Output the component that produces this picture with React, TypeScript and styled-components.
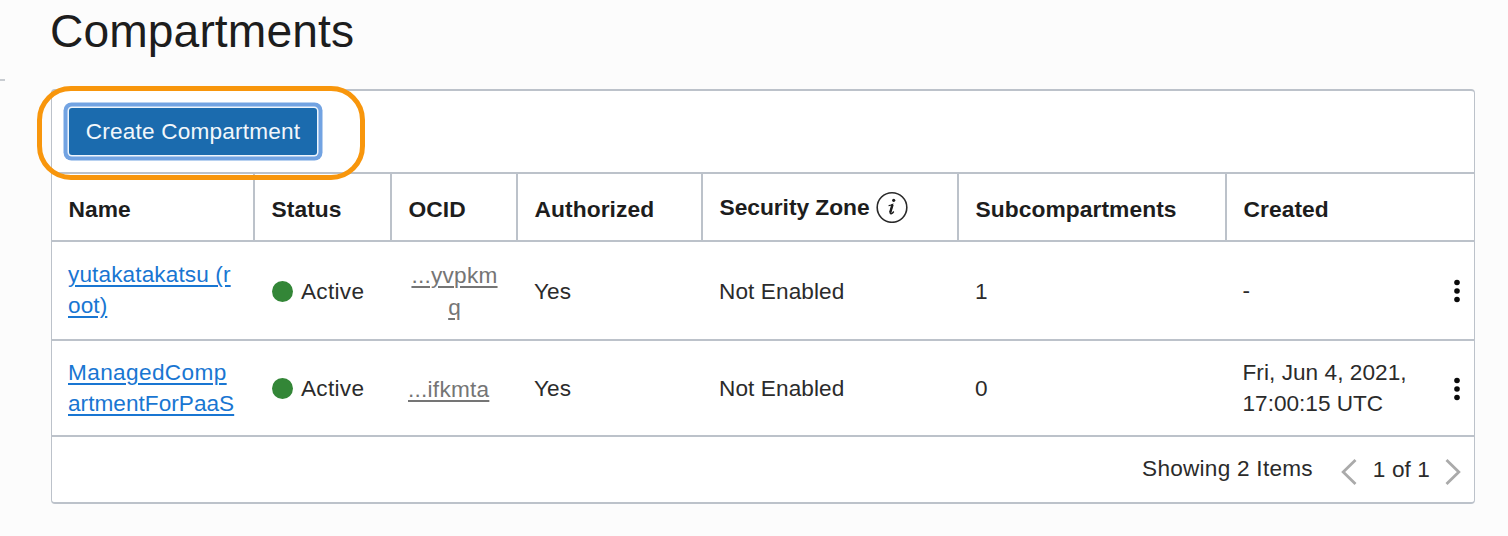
import React from "react";
import styled, { createGlobalStyle } from "styled-components";

const line = "#bcc2ca";

const GlobalStyle = createGlobalStyle`
  * { box-sizing: border-box; }
  body {
    margin: 0;
    background: #fcfcfc;
    color: #2b2b2b;
    font-family: "Liberation Sans", Arial, sans-serif;
    font-size: 22.6px;
    line-height: 31px;
    letter-spacing: 0.1px;
    overflow: hidden;
  }
`;

const Page = styled.main`
  width: 1508px;
  height: 536px;
  display: flex;
  align-items: flex-start;
`;

const SideEdge = styled.div`
  width: 5px;
  height: 2px;
  margin: 79px 46px 0 0;
  background: #c8ccd1;
`;

const Content = styled.section`
  width: 1424px;
`;

const Title = styled.h1`
  margin: 0 0 0 -1px;
  height: 89px;
  padding-top: 5px;
  font-size: 46.2px;
  font-weight: 400;
  line-height: 52px;
  color: #1d1d1d;
`;

const Panel = styled.div`
  background: #fff;
  border: 1px solid ${line};
  border-width: 2px 1px 2px 1px;
  border-radius: 4px;
`;

const Toolbar = styled.div`
  position: relative;
  height: 81px;
  padding: 17px 0 0 17px;
`;

const CreateButton = styled.button`
  display: block;
  width: 248px;
  height: 47px;
  padding: 0 0 1px;
  border: 0;
  border-radius: 3px;
  background: #1b6bae;
  box-shadow: 0 0 0 1.5px #eef5fc, 0 0 0 5.5px #72a3e2;
  color: #f2f7fb;
  font: inherit;
  letter-spacing: 0.2px;
  white-space: nowrap;
`;

const Highlight = styled.div`
  position: absolute;
  left: -15px;
  top: -5px;
  width: 328px;
  height: 94px;
  border: 5px solid #f8960c;
  border-radius: 34px;
  pointer-events: none;
`;

const Table = styled.div`
  display: grid;
  grid-template-columns: 203px 137px 126px 185px 256px 268px 1fr;
`;

const HeadCell = styled.div<{ $last?: boolean; $raise?: boolean }>`
  height: 68px;
  display: flex;
  align-items: center;
  gap: ${(p) => (p.$raise ? "6px" : "0")};
  padding: ${(p) => (p.$raise ? "0 0 0 16.5px" : "4px 0 0 16.5px")};
  border-top: 2px solid ${line};
  border-right: ${(p) => (p.$last ? "0" : `2px solid ${line}`)};
  font-size: 22.8px;
  font-weight: 700;
  letter-spacing: ${(p) => (p.$raise ? "-0.05px" : "0.06px")};
  color: #1d1d1d;
  white-space: nowrap;
`;

const Cell = styled.div<{ $height: number }>`
  height: ${(p) => p.$height}px;
  display: flex;
  align-items: center;
  padding: 1px 0 0 16px;
  border-top: 2px solid ${line};
  white-space: nowrap;
`;

const TextLine = styled.span<{ $tracking: number }>`
  display: block;
  letter-spacing: ${(p) => p.$tracking}px;
`;

const NameLink = styled.a`
  margin-top: -2px;
  color: #1976d2;
  text-decoration: underline;
  text-decoration-thickness: 1.5px;
  text-underline-offset: 3px;
`;

const Ocid = styled.a<{ $width: number }>`
  width: ${(p) => p.$width}px;
  margin-top: 2px;
  text-align: center;
  color: #757575;
  line-height: 32px;
  text-decoration: underline;
  text-decoration-thickness: 1.5px;
  text-underline-offset: 3px;
`;

const StatusDot = styled.span`
  width: 21px;
  height: 21px;
  margin: 0 8px 0 1px;
  border-radius: 50%;
  background: #338637;
`;

const StatusText = styled.span`
  letter-spacing: 0.3px;
`;

const Created = styled.div`
  flex: 1;
  margin: -2px 0 0 -0.5px;
`;

const MenuIcon = styled.svg`
  width: 8px;
  height: 24px;
  margin-right: 13px;
`;

const Footer = styled.footer`
  height: 67px;
  display: flex;
  align-items: center;
  justify-content: flex-end;
  padding-right: 13px;
  border-top: 2px solid ${line};
  white-space: nowrap;
`;

const Count = styled.span`
  margin: 0 28.5px 3px 0;
  letter-spacing: 0.25px;
`;

const PageOf = styled.span`
  margin: 0 15px 0 15.5px;
`;

const Chevron = styled.svg`
  width: 16px;
  height: 28px;
  margin-top: 5px;
`;

const KebabMenu = () => (
  <MenuIcon viewBox="0 0 8 24" fill="#0a0a0a">
    <circle cx="4" cy="3.5" r="2.8" />
    <circle cx="4" cy="12" r="2.8" />
    <circle cx="4" cy="20.5" r="2.8" />
  </MenuIcon>
);

const InfoIcon = () => (
  <svg width="32" height="32" viewBox="0 0 32 32" fill="none">
    <circle cx="16" cy="16.5" r="14.8" stroke="#2a2a2a" strokeWidth="1.6" />
    <circle cx="17.7" cy="9.3" r="1.6" fill="#1d1d1d" />
    <path
      d="M12.6 14.7q2-.2 3.900-1.200l-2.200 7.600q-.4 2.200 1.200 1.500 1.200-.6 2.300-2.100"
      stroke="#1d1d1d"
      strokeWidth="1.300"
    />
    <path d="M16.500 13.700l-2.300 8" stroke="#1d1d1d" strokeWidth="2.400" />
  </svg>
);

type Line = { text: string; tracking?: number };

const rows: {
  height: number;
  name: Line[];
  ocid: Line[];
  ocidWidth: number;
  subs: string;
  created: Line[];
}[] = [
  {
    height: 99,
    name: [{ text: "yutakatakatsu (r", tracking: 0.12 }, { text: "oot)" }],
    ocid: [{ text: "...yvpkm", tracking: 0.25 }, { text: "q" }],
    ocidWidth: 93,
    subs: "1",
    created: [{ text: "-" }],
  },
  {
    height: 96,
    name: [{ text: "ManagedComp", tracking: 0.38 }, { text: "artmentForPaaS", tracking: 0.03 }],
    ocid: [{ text: "...ifkmta", tracking: 0.25 }],
    ocidWidth: 79,
    subs: "0",
    created: [{ text: "Fri, Jun 4, 2021,", tracking: 0.05 }, { text: "17:00:15 UTC", tracking: 0 }],
  },
];

const Lines = ({ items }: { items: Line[] }) => (
  <>
    {items.map(({ text, tracking = 0.1 }) => (
      <TextLine key={text} $tracking={tracking}>
        {text}
      </TextLine>
    ))}
  </>
);

export default function App() {
  return (
    <>
      <GlobalStyle />
      <Page>
        <SideEdge />
        <Content>
          <Title>Compartments</Title>
          <Panel>
            <Toolbar>
              <CreateButton>Create Compartment</CreateButton>
              <Highlight />
            </Toolbar>
            <Table>
              <HeadCell>Name</HeadCell>
              <HeadCell>Status</HeadCell>
              <HeadCell>OCID</HeadCell>
              <HeadCell>Authorized</HeadCell>
              <HeadCell $raise>
                Security Zone <InfoIcon />
              </HeadCell>
              <HeadCell>Subcompartments</HeadCell>
              <HeadCell $last>Created</HeadCell>
              {rows.map((row) => (
                <React.Fragment key={row.subs}>
                  <Cell $height={row.height}>
                    <NameLink>
                      <Lines items={row.name} />
                    </NameLink>
                  </Cell>
                  <Cell $height={row.height}>
                    <StatusDot />
                    <StatusText>Active</StatusText>
                  </Cell>
                  <Cell $height={row.height}>
                    <Ocid $width={row.ocidWidth}>
                      <Lines items={row.ocid} />
                    </Ocid>
                  </Cell>
                  <Cell $height={row.height}>Yes</Cell>
                  <Cell $height={row.height}>Not Enabled</Cell>
                  <Cell $height={row.height}>{row.subs}</Cell>
                  <Cell $height={row.height}>
                    <Created>
                      <Lines items={row.created} />
                    </Created>
                    <KebabMenu />
                  </Cell>
                </React.Fragment>
              ))}
            </Table>
            <Footer>
              <Count>Showing 2 Items</Count>
              <Chevron viewBox="0 0 16 28" fill="none" stroke="#aaaaaa" strokeWidth="2.8">
                <path d="M14.500 2L2.200 14l12.300 12" />
              </Chevron>
              <PageOf>1 of 1</PageOf>
              <Chevron viewBox="0 0 16 28" fill="none" stroke="#aaaaaa" strokeWidth="2.8">
                <path d="M1.500 2L13.800 14 1.500 26" />
              </Chevron>
            </Footer>
          </Panel>
        </Content>
      </Page>
    </>
  );
}
